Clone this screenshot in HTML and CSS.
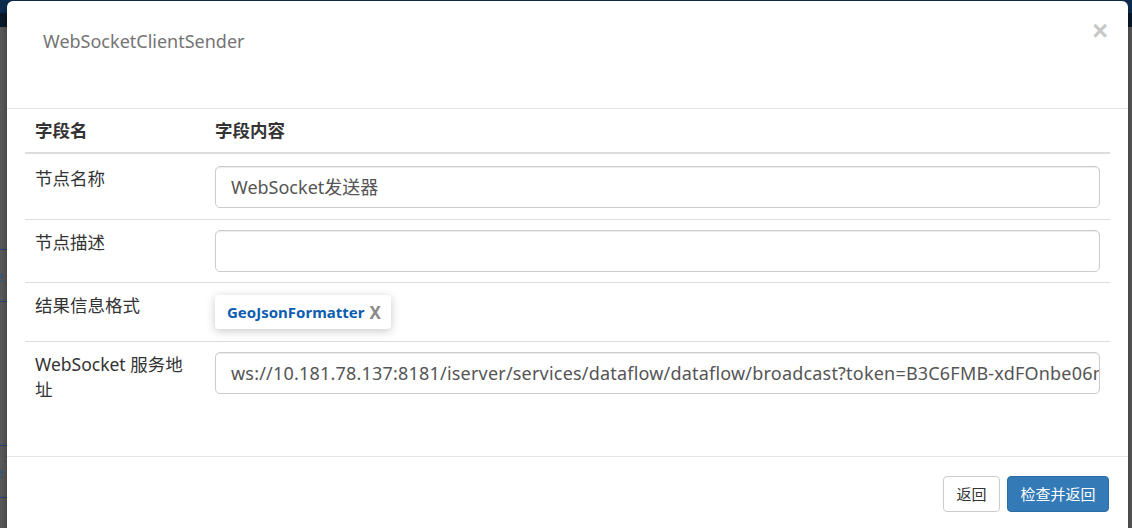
FILE: index.html
```html
<!DOCTYPE html>
<html lang="zh-CN">
<head>
<meta charset="utf-8">
<title>WebSocketClientSender</title>
<link rel="stylesheet" href="styles.css">
</head>
<body>
<div class="page">
  <div class="topbar"><div class="topbar-upper"></div></div>
  <div class="side">
    <div class="side-item"><span class="side-e">e</span></div>
    <div class="side-gap"></div>
    <div class="side-item"><span class="side-e">e</span></div>
  </div>
</div>

<div class="modal">
  <div class="modal-header">
    <h4 class="modal-title">WebSocketClientSender</h4>
    <span class="close">&times;</span>
  </div>
  <div class="modal-body">
    <table class="fields">
      <colgroup>
        <col class="col-first">
        <col>
      </colgroup>
      <thead>
        <tr><th>字段名</th><th>字段内容</th></tr>
      </thead>
      <tbody>
        <tr class="first">
          <td class="col-name">节点名称</td>
          <td><div class="input">WebSocket发送器</div></td>
        </tr>
        <tr>
          <td class="col-name">节点描述</td>
          <td><div class="input"></div></td>
        </tr>
        <tr>
          <td class="col-name">结果信息格式</td>
          <td class="tag-cell"><span class="tag"><span class="tag-text">GeoJsonFormatter</span><span class="tag-x">X</span></span></td>
        </tr>
        <tr>
          <td class="col-name">WebSocket 服务地址</td>
          <td><div class="input input-url">ws://10.181.78.137:8181/iserver/services/dataflow/dataflow/broadcast?token=B3C6FMB-xdFOnbe06mZJ2cQ</div></td>
        </tr>
      </tbody>
    </table>
  </div>
  <div class="modal-footer">
    <button class="btn btn-default">返回</button>
    <button class="btn btn-primary">检查并返回</button>
  </div>
</div>
</body>
</html>
```

FILE: styles.css
```css
html, body {
  margin: 0;
  padding: 0;
}
body {
  width: 1132px;
  height: 528px;
  overflow: hidden;
  position: relative;
  background: #5e5e5e;
  font-family: "Noto Sans", "Noto Sans CJK SC", sans-serif;
  color: #333;
}

/* page behind the backdrop */
.page {
  display: flex;
  flex-direction: column;
}
.topbar {
  height: 27px;
  background: #0b1a2b;
}
.topbar-upper {
  height: 13px;
  background: #0d2e52;
}
.side {
  display: flex;
  flex-direction: column;
  width: 7px;
  padding-top: 222px;
}
.side-item {
  height: 51px;
  border-top: 1px solid #254a78;
  border-bottom: 1px solid #254a78;
  display: flex;
  align-items: center;
  overflow: hidden;
}
.side-e {
  color: #2f5a8c;
  font-size: 16px;
  margin-left: -6px;
}
.side-gap {
  height: 143px;
}

/* modal */
.modal {
  position: absolute;
  left: 7px;
  top: 1px;
  width: 1121px;
  height: 560px;
  background: #fff;
  border-radius: 6px;
  box-shadow: 0 4px 12px rgba(0, 0, 0, 0.45);
}
.modal-header {
  position: relative;
  height: 107px;
  border-bottom: 1px solid #e5e5e5;
  padding: 0 36px;
}
.modal-title {
  margin: 0;
  padding-top: 27px;
  font-size: 18px;
  line-height: 26px;
  font-weight: normal;
  color: #747474;
}
.close {
  position: absolute;
  right: 20px;
  top: 14px;
  font-size: 27px;
  line-height: 32px;
  font-weight: bold;
  color: #c8c8c8;
  font-family: "Liberation Sans", sans-serif;
}

.modal-body {
  padding: 0 18px 44px 18px;
}
.fields {
  width: 100%;
  table-layout: fixed;
  border-collapse: collapse;
  font-size: 17.5px;
}
.col-first {
  width: 180px;
}
.fields th {
  text-align: left;
  font-weight: bold;
  padding: 9px 10px 9px;
  line-height: 25px;
  border-bottom: 2px solid #dddddd;
}
.fields td {
  padding: 10px;
  line-height: 25px;
  vertical-align: top;
  border-top: 1px solid #dddddd;
}
.fields tr.first td {
  border-top: none;
  padding-top: 12px;
  padding-bottom: 11px;
}
.fields td.tag-cell {
  padding-top: 12px;
  padding-bottom: 12px;
}
.fields td.col-name {
  padding-right: 20px;
  color: #333;
}

.input {
  box-sizing: border-box;
  height: 42px;
  border: 1px solid #cccccc;
  border-radius: 5px;
  padding: 7px 15px;
  line-height: 26px;
  font-size: 18px;
  color: #555;
  white-space: nowrap;
  overflow: hidden;
  box-shadow: inset 0 1px 1px rgba(0, 0, 0, 0.075);
}
.input-url {
  letter-spacing: 0.2px;
}

.tag {
  display: inline-flex;
  align-items: center;
  height: 34px;
  padding: 0 10px 0 12px;
  background: #fff;
  border-radius: 4px;
  box-shadow: 0 2px 10px rgba(0, 0, 0, 0.22);
  font-size: 15px;
  font-weight: bold;
}
.tag-text {
  color: #0d5eb0;
}
.tag-x {
  color: #8a8a8a;
  font-size: 17px;
  margin-left: 5px;
}

.modal-footer {
  border-top: 1px solid #e5e5e5;
  padding: 19px 19px;
  display: flex;
  justify-content: flex-end;
  gap: 7px;
}
.btn {
  box-sizing: border-box;
  height: 36px;
  padding: 0 12.5px;
  font-size: 15px;
  line-height: 34px;
  border-radius: 4px;
  border: 1px solid #cccccc;
  font-family: "Noto Sans CJK SC", sans-serif;
  cursor: pointer;
}
.btn-default {
  background: #fff;
  color: #333;
}
.btn-primary {
  background: #337ab7;
  border-color: #2e6da4;
  color: #fff;
}
```
